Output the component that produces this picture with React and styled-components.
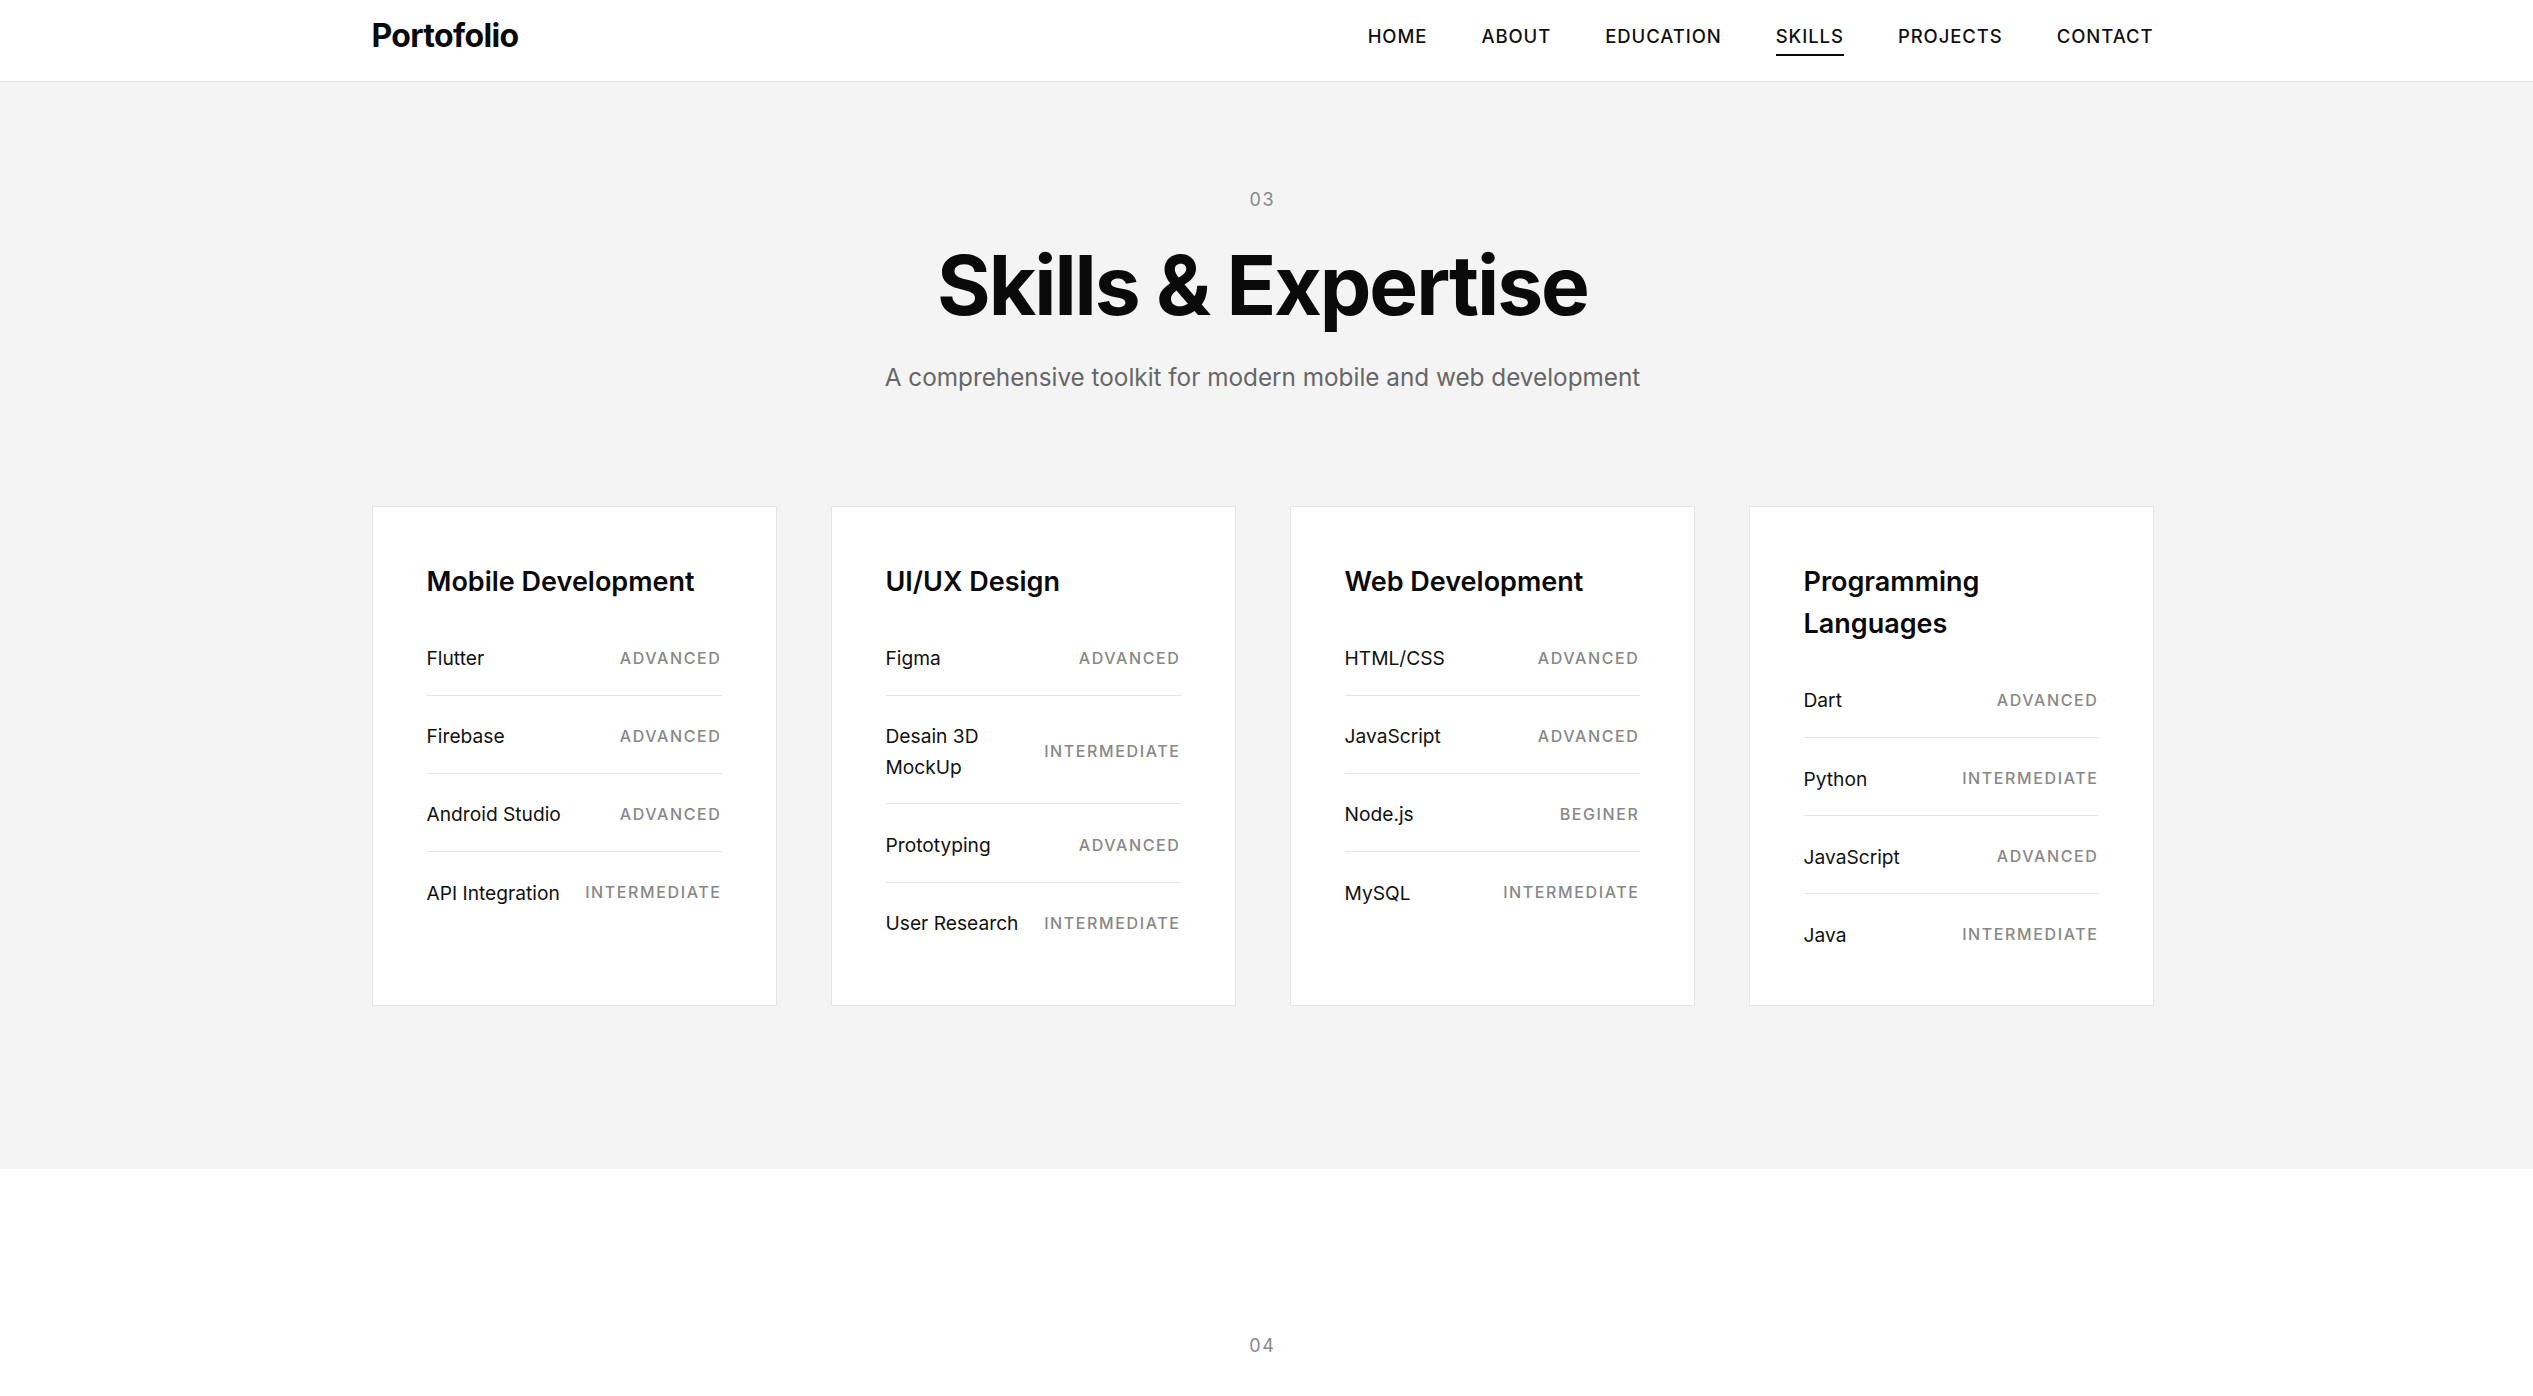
import React from "react";
import styled, { createGlobalStyle } from "styled-components";

const GlobalStyle = createGlobalStyle`
  *, *::before, *::after { box-sizing: border-box; }
  html, body { margin: 0; padding: 0; }
  body {
    font-family: Inter, "Noto Sans", "Liberation Sans", sans-serif;
    color: #111;
    background: #fff;
    -webkit-font-smoothing: antialiased;
  }
`;

const Container = styled.div`
  width: 1790px;
  padding-right: 8px;
  margin: 0 auto;
`;

const Header = styled.header`
  height: 82px;
  background: #fff;
  border-bottom: 1px solid #e5e5e5;
`;

const HeaderInner = styled(Container)`
  height: 100%;
  display: flex;
  align-items: center;
  justify-content: space-between;
  padding-bottom: 10px;
`;

const Logo = styled.a`
  font-size: 32px;
  font-weight: 700;
  letter-spacing: -0.02em;
  line-height: 1.6;
  color: #0a0a0a;
  text-decoration: none;
`;

const Nav = styled.nav`
  display: flex;
  gap: 54px;
`;

const NavLink = styled.a`
  position: relative;
  padding-top: 3px;
  font-size: 18.5px;
  font-weight: 500;
  letter-spacing: 0.05em;
  line-height: 1.6;
  color: #111;
  text-decoration: none;
  text-transform: uppercase;

  &::after {
    content: "";
    position: absolute;
    left: 0;
    right: 0;
    bottom: -4px;
    height: 2px;
    background: #0a0a0a;
    opacity: ${(p) => (p.$active ? 1 : 0)};
  }
`;

const Section = styled.section`
  background: ${(p) => (p.$muted ? "#f4f4f4" : "#fff")};
  padding: ${(p) => p.$pad};
`;

const SectionHead = styled.div`
  text-align: center;
`;

const SectionNumber = styled.div`
  font-size: 18px;
  letter-spacing: 0.1em;
  line-height: 1.6;
  color: #888;
`;

const Title = styled.h2`
  margin: 26px 0 0;
  font-size: 82px;
  font-weight: 700;
  letter-spacing: -0.025em;
  line-height: 1.1;
  color: #0a0a0a;
`;

const Subtitle = styled.p`
  margin: 27px 0 0;
  font-size: 24.3px;
  line-height: 1.6;
  color: #666;
`;

const Grid = styled.div`
  margin-top: 109px;
  display: grid;
  grid-template-columns: repeat(4, 1fr);
  gap: 54px;
`;

const Card = styled.article`
  background: #fff;
  border: 1px solid #e5e5e5;
  padding: 54px;
`;

const CardTitle = styled.h3`
  margin: 0 0 14.4px;
  font-size: 27px;
  font-weight: 600;
  line-height: 42.2px;
  color: #0a0a0a;
`;

const SkillList = styled.ul`
  list-style: none;
  margin: 0;
  padding: 0;
`;

const SkillRow = styled.li`
  display: flex;
  align-items: center;
  justify-content: space-between;
  gap: 16px;
  padding: 25.8px 0 20.6px;
  border-bottom: 1px solid #e5e5e5;

  &:last-child {
    padding-bottom: 0;
    border-bottom: none;
  }
`;

const SkillName = styled.span`
  font-size: 19.2px;
  line-height: 1.6;
  color: #111;
`;

const SkillLevel = styled.span`
  flex-shrink: 0;
  font-size: 16px;
  font-weight: 500;
  letter-spacing: 0.1em;
  line-height: 1.6;
  color: #888;
  text-transform: uppercase;
  white-space: nowrap;
`;

const navItems = ["Home", "About", "Education", "Skills", "Projects", "Contact"];

const skillGroups = [
  {
    title: "Mobile Development",
    skills: [
      ["Flutter", "Advanced"],
      ["Firebase", "Advanced"],
      ["Android Studio", "Advanced"],
      ["API Integration", "Intermediate"],
    ],
  },
  {
    title: "UI/UX Design",
    skills: [
      ["Figma", "Advanced"],
      ["Desain 3D MockUp", "Intermediate"],
      ["Prototyping", "Advanced"],
      ["User Research", "Intermediate"],
    ],
  },
  {
    title: "Web Development",
    skills: [
      ["HTML/CSS", "Advanced"],
      ["JavaScript", "Advanced"],
      ["Node.js", "Beginer"],
      ["MySQL", "Intermediate"],
    ],
  },
  {
    title: "Programming Languages",
    skills: [
      ["Dart", "Advanced"],
      ["Python", "Intermediate"],
      ["JavaScript", "Advanced"],
      ["Java", "Intermediate"],
    ],
  },
];

export default function App() {
  return (
    <>
      <GlobalStyle />
      <Header>
        <HeaderInner>
          <Logo href="#">Portofolio</Logo>
          <Nav>
            {navItems.map((item) => (
              <NavLink key={item} href="#" $active={item === "Skills"}>
                {item}
              </NavLink>
            ))}
          </Nav>
        </HeaderInner>
      </Header>

      <Section $muted $pad="104px 0 163px">
        <Container>
          <SectionHead>
            <SectionNumber>03</SectionNumber>
            <Title>Skills &amp; Expertise</Title>
            <Subtitle>A comprehensive toolkit for modern mobile and web development</Subtitle>
          </SectionHead>
          <Grid>
            {skillGroups.map((group) => (
              <Card key={group.title}>
                <CardTitle>{group.title}</CardTitle>
                <SkillList>
                  {group.skills.map(([name, level]) => (
                    <SkillRow key={name}>
                      <SkillName>{name}</SkillName>
                      <SkillLevel>{level}</SkillLevel>
                    </SkillRow>
                  ))}
                </SkillList>
              </Card>
            ))}
          </Grid>
        </Container>
      </Section>

      <Section $pad="163px 0 160px">
        <Container>
          <SectionHead>
            <SectionNumber>04</SectionNumber>
          </SectionHead>
        </Container>
      </Section>
    </>
  );
}
